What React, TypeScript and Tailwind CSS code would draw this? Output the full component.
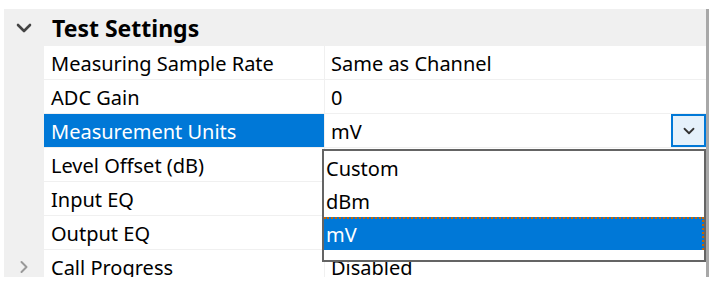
import { ChevronDown, ChevronRight } from 'lucide-react';

type Row = {
  label: string;
  value: string;
  selected?: boolean;
  combo?: boolean;
  collapsed?: boolean;
};

// values of the rows under the open list are hidden by it
const rows: Row[] = [
  { label: 'Measuring Sample Rate', value: 'Same as Channel' },
  { label: 'ADC Gain', value: '0' },
  { label: 'Measurement Units', value: 'mV', selected: true, combo: true },
  { label: 'Level Offset (dB)', value: '' },
  { label: 'Input EQ', value: '' },
  { label: 'Output EQ', value: '' },
  { label: 'Call Progress', value: 'Disabled', collapsed: true },
];

const options = ['Custom', 'dBm', 'mV'];

export default function App() {
  return (
    <div
      className="w-[720px] h-[294px] bg-white pt-[9px] pl-[4px] text-[20px] text-black"
      style={{ fontFamily: '"Noto Sans", "Open Sans", sans-serif' }}
    >
      <div className="relative w-[705px] h-[268px] overflow-hidden border-r-[3px] border-[#a8a8a8] bg-[#f0f0f0]">
        {/* category header */}
        <div className="flex h-[37px] items-center">
          <div className="flex w-[40px] justify-center">
            <ChevronDown className="w-[24px] h-[24px] text-[#444]" strokeWidth={2.6} />
          </div>
          <div className="pl-[8px] pt-[2px] font-bold text-[23px] leading-none">Test Settings</div>
        </div>

        {rows.map((row) => (
          <div key={row.label} className="flex h-[34px] pb-[1px] leading-none">
            <div className="flex w-[40px] items-center justify-center">
              {row.collapsed && (
                <ChevronRight className="w-[20px] h-[20px] text-[#999]" strokeWidth={2.4} />
              )}
            </div>
            <div
              className={
                row.selected
                  ? 'flex w-[280px] items-center bg-[#0078d7] pl-[7px] pt-[2px] text-white'
                  : 'flex w-[280px] items-center bg-white pl-[7px] pt-[2px]'
              }
            >
              {row.label}
            </div>
            <div className="ml-[1px] flex flex-1 items-center bg-white pl-[6px]">
              <span className="flex-1 pt-[2px]">{row.value}</span>
              {row.combo && (
                <div className="flex h-[33px] w-[35px] items-center justify-center border-2 border-[#0078d7] bg-[#e5f1fb]">
                  <ChevronDown className="w-[18px] h-[18px] text-[#333]" strokeWidth={2.4} />
                </div>
              )}
            </div>
          </div>
        ))}

        {/* open dropdown list */}
        <div className="absolute left-[318px] top-[140px] w-[384px] h-[113px] border-2 border-[#646464] bg-white leading-none">
          {options.map((opt) => (
            <div
              key={opt}
              className={
                opt === 'mV'
                  ? 'flex h-[33px] items-center border-t-2 border-r-2 border-dotted border-[#c86400] bg-[#0078d7] pl-[2px] text-white'
                  : 'flex h-[33px] items-center pl-[2px] pt-[2px]'
              }
            >
              {opt}
            </div>
          ))}
        </div>
      </div>
    </div>
  );
}
